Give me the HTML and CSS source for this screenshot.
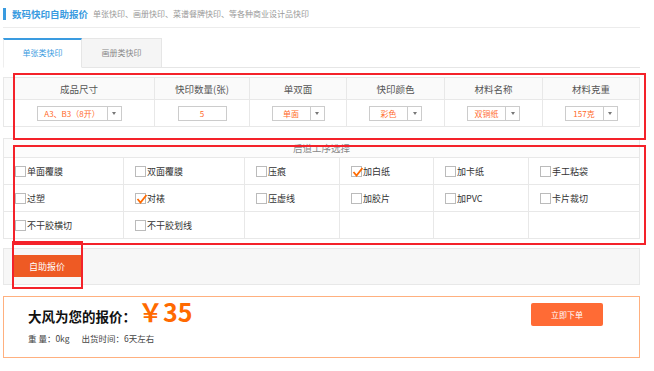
FILE: index.html
```html
<!DOCTYPE html>
<html lang="zh-CN">
<head>
  <meta charset="UTF-8">
  <title>数码快印自助报价</title>
  <link rel="stylesheet" href="styles.css">
</head>
<body>

<div class="page">
  <div class="top">
    <span class="bar"></span>
    <span class="title">数码快印自助报价</span>
    <span class="sub">单张快印、画册快印、菜谱餐牌快印、等各种商业设计品快印</span>
  </div>

  <div class="tabs">
    <div class="tab active">单张类快印</div>
    <div class="tab">画册类快印</div>
  </div>

  <div class="spec">
    <div class="th">成品尺寸</div>
    <div class="th">快印数量(张)</div>
    <div class="th">单双面</div>
    <div class="th">快印颜色</div>
    <div class="th">材料名称</div>
    <div class="th">材料克重</div>

    <div class="td"><div class="sel w84"><span>A3、B3（8开）</span><i></i></div></div>
    <div class="td"><div class="num">5</div></div>
    <div class="td"><div class="sel"><span>单面</span><i></i></div></div>
    <div class="td"><div class="sel"><span>彩色</span><i></i></div></div>
    <div class="td"><div class="sel"><span>双铜纸</span><i></i></div></div>
    <div class="td"><div class="sel"><span>157克</span><i></i></div></div>
  </div>

  <div class="craft">
    <div class="craft-head">后道工序选择</div>
    <label class="ck"><i></i>单面覆膜</label>
    <label class="ck"><i></i>双面覆膜</label>
    <label class="ck"><i></i>压痕</label>
    <label class="ck on"><i><svg viewBox="0 0 11 11"><polyline points="1.5,5 4.5,8.5 10.5,1"/></svg></i>加白纸</label>
    <label class="ck"><i></i>加卡纸</label>
    <label class="ck"><i></i>手工粘袋</label>

    <label class="ck"><i></i>过塑</label>
    <label class="ck on"><i><svg viewBox="0 0 11 11"><polyline points="1.5,5 4.5,8.5 10.5,1"/></svg></i>对裱</label>
    <label class="ck"><i></i>压虚线</label>
    <label class="ck"><i></i>加胶片</label>
    <label class="ck"><i></i>加PVC</label>
    <label class="ck"><i></i>卡片裁切</label>

    <label class="ck"><i></i>不干胶横切</label>
    <label class="ck"><i></i>不干胶划线</label>
    <div class="ck"></div>
    <div class="ck"></div>
    <div class="ck"></div>
    <div class="ck"></div>
  </div>

  <div class="action">
    <button type="button" class="btn-quote">自助报价</button>
  </div>

  <div class="result">
    <div class="res-left">
      <div class="price-line">
        <span class="who">大风为您的报价：</span>
        <span class="price">￥35</span>
      </div>
      <div class="meta"><span>重 量：0kg</span><span>出货时间：6天左右</span></div>
    </div>
    <button type="button" class="btn-order">立即下单</button>
  </div>
</div>

<div class="mark m1"></div>
<div class="mark m2"></div>
<div class="mark m3"></div>

</body>
</html>
```

FILE: styles.css
```css
body {
  margin: 0;
  position: relative;
  background: #fff;
  font-family: "Noto Sans CJK SC", "Microsoft YaHei", sans-serif;
  color: #333;
}
.page {
  width: 637px;
  padding: 0 3px;
}
.top {
  height: 28px;
  box-sizing: border-box;
  border-bottom: 1px solid #ececec;
  padding-top: 8px;
  display: flex;
  align-items: flex-start;
}
.bar {
  width: 3px;
  height: 12px;
  background: #3a9be0;
  margin-right: 6px;
}
.title {
  font-size: 9.5px;
  line-height: 12px;
  font-weight: bold;
  color: #3a9be0;
  margin-right: 5px;
}
.sub {
  font-size: 8px;
  line-height: 12px;
  color: #999;
}
.tabs {
  margin-top: 10px;
  display: flex;
  border-bottom: 1px solid #e6e6e6;
  height: 30px;
  box-sizing: border-box;
}
.tab {
  width: 80px;
  height: 30px;
  box-sizing: border-box;
  border: 1px solid #e6e6e6;
  border-left: none;
  background: #f5f5f5;
  color: #888;
  font-size: 8px;
  line-height: 28px;
  text-align: center;
}
.tab.active {
  width: 79px;
  background: #fff;
  color: #3a9be0;
  border-top: 2px solid #3a9be0;
  border-left: 1px solid #eee;
  border-bottom: 1px solid #fff;
  line-height: 26px;
}
.spec {
  margin-top: 9px;
  display: grid;
  grid-template-columns: 151px 95px 97px 98px 98px 97px;
  border-top: 1px solid #e8e8e8;
  border-left: 1px solid #e8e8e8;
}
.th, .td {
  border-right: 1px solid #e8e8e8;
  border-bottom: 1px solid #e8e8e8;
  box-sizing: border-box;
  display: flex;
  align-items: center;
  justify-content: center;
}
.th {
  height: 22px;
  background: #fafafa;
  font-size: 9.5px;
  color: #555;
}
.td {
  height: 27px;
  padding-top: 1px;
}
.sel {
  width: 53px;
  height: 15px;
  box-sizing: border-box;
  border: 1px solid #ccc;
  display: flex;
  background: #fff;
}
.sel.w84 {
  width: 85px;
}
.sel span {
  flex: 1;
  text-align: center;
  font-size: 8px;
  line-height: 13px;
  color: #ff6a2a;
}
.sel i {
  width: 13px;
  border-left: 1px solid #ccc;
  display: flex;
  align-items: center;
  justify-content: center;
}
.sel i::after {
  content: "";
  border-top: 3px solid #777;
  border-left: 2.5px solid transparent;
  border-right: 2.5px solid transparent;
}
.num {
  width: 49px;
  height: 15px;
  box-sizing: border-box;
  border: 1px solid #ccc;
  text-align: center;
  font-size: 8px;
  line-height: 13px;
  color: #ff6a2a;
}
.craft {
  margin-top: 11px;
  display: grid;
  grid-template-columns: 120px 121px 95px 94px 95px 111px;
  border-top: 1px solid #e8e8e8;
  border-left: 1px solid #e8e8e8;
}
.craft-head {
  grid-column: 1 / -1;
  height: 19px;
  box-sizing: border-box;
  border-right: 1px solid #e8e8e8;
  border-bottom: 1px solid #e8e8e8;
  background: #fcfcfc;
  text-align: center;
  font-size: 9.5px;
  line-height: 18px;
  color: #888;
}
.ck {
  height: 27px;
  box-sizing: border-box;
  border-right: 1px solid #e8e8e8;
  border-bottom: 1px solid #e8e8e8;
  display: flex;
  align-items: center;
  padding-left: 11px;
  font-size: 9px;
  color: #333;
}
.ck i {
  width: 11px;
  height: 11px;
  box-sizing: border-box;
  border: 1px solid #bbb;
  background: #fff;
  margin-right: 1px;
  position: relative;
}
.ck svg {
  position: absolute;
  left: 0;
  top: 0;
  width: 11px;
  height: 11px;
  fill: none;
  stroke: #ff6a00;
  stroke-width: 1.8;
}
.action {
  margin-top: 9px;
  height: 37px;
  box-sizing: border-box;
  background: #f7f7f7;
  border: 1px solid #e8e8e8;
  padding: 6px 0 0 8px;
  display: flex;
  align-items: flex-start;
}
.btn-quote {
  width: 70px;
  height: 22px;
  border: none;
  background: #ee5a24;
  color: #fff;
  font-family: inherit;
  font-size: 9px;
  padding: 0;
  cursor: pointer;
}
.result {
  margin-top: 11px;
  height: 62px;
  box-sizing: border-box;
  border: 1px solid #ffb07f;
  display: flex;
  justify-content: space-between;
  align-items: flex-start;
  padding: 0 36px 0 24px;
}
.price-line {
  display: flex;
  align-items: baseline;
  height: 29px;
}
.who {
  font-size: 13.5px;
  font-weight: bold;
  color: #111;
}
.price {
  font-size: 25px;
  font-weight: bold;
  color: #ff6a00;
  line-height: 29px;
  margin-left: 2px;
}
.meta {
  margin-top: 6px;
  font-size: 8.5px;
  color: #444;
}
.meta span + span {
  margin-left: 12px;
}
.btn-order {
  margin-top: 6px;
  width: 72px;
  height: 23px;
  border: none;
  border-radius: 2px;
  background: #ff6b35;
  color: #fff;
  font-family: inherit;
  font-size: 8px;
  padding: 0;
  cursor: pointer;
}
.mark {
  position: absolute;
  border: 2px solid #f4222a;
  box-sizing: border-box;
  pointer-events: none;
}
.m1 {
  left: 13px;
  top: 73px;
  width: 633px;
  height: 67px;
}
.m2 {
  left: 13px;
  top: 145px;
  width: 633px;
  height: 100px;
}
.m3 {
  left: 12px;
  top: 241px;
  width: 71px;
  height: 48px;
}
```
